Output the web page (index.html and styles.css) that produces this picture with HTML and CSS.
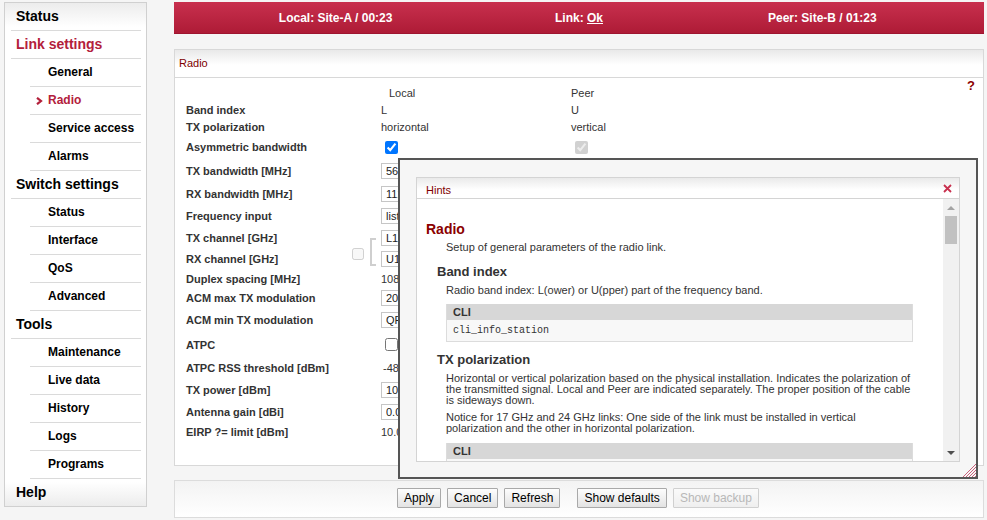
FILE: index.html
```html
<!DOCTYPE html>
<html>
<head>
<meta charset="utf-8">
<title>Radio</title>
<link rel="stylesheet" href="styles.css">
</head>
<body>
<div class="page">
  <nav class="sidebar">
    <ul class="menu">
      <li class="top">Status</li>
      <li class="top active">Link settings</li>
      <li class="sub">General</li>
      <li class="sub active"><svg class="chev" width="7" height="8" viewBox="0 0 7 8"><polyline points="1,0.8 5,4 1,7.2" fill="none" stroke="#b3203b" stroke-width="2.2"/></svg>Radio</li>
      <li class="sub">Service access</li>
      <li class="sub">Alarms</li>
      <li class="top">Switch settings</li>
      <li class="sub">Status</li>
      <li class="sub">Interface</li>
      <li class="sub">QoS</li>
      <li class="sub">Advanced</li>
      <li class="top">Tools</li>
      <li class="sub">Maintenance</li>
      <li class="sub">Live data</li>
      <li class="sub">History</li>
      <li class="sub">Logs</li>
      <li class="sub">Programs</li>
      <li class="top last">Help</li>
    </ul>
  </nav>

  <main class="main">
    <header class="topbar">
      <div>Local: Site-A / 00:23</div>
      <div>Link: <u>Ok</u></div>
      <div>Peer: Site-B / 01:23</div>
    </header>

    <section class="panel">
      <div class="panel-title">Radio</div>
      <div class="panel-body">
        <span class="help">?</span>
        <div class="form">
          <div></div><div class="colhead local-head">Local</div><div class="colhead">Peer</div>

          <div class="lbl">Band index</div><div class="val">L</div><div class="val">U</div>
          <div class="lbl">TX polarization</div><div class="val">horizontal</div><div class="val">vertical</div>
          <div class="lbl">Asymmetric bandwidth</div><div class="val"><input type="checkbox" class="chk" checked></div><div class="val"><input type="checkbox" class="chk" checked disabled></div>
          <div class="lbl">TX bandwidth [MHz]</div><div class="val"><input class="inp" value="56"></div><div></div>
          <div class="lbl">RX bandwidth [MHz]</div><div class="val"><input class="inp" value="112"></div><div></div>
          <div class="lbl">Frequency input</div><div class="val"><input class="inp" value="list"></div><div></div>
          <div class="lbl has-link">TX channel [GHz]<div class="linker"><input type="checkbox" class="chk link-chk" disabled><span class="bracket"></span></div></div><div class="val"><input class="inp" value="L1"></div><div></div>
          <div class="lbl">RX channel [GHz]</div><div class="val"><input class="inp" value="U1"></div><div></div>
          <div class="lbl">Duplex spacing [MHz]</div><div class="val">1080</div><div></div>
          <div class="lbl">ACM max TX modulation</div><div class="val"><input class="inp" value="2048QAM"></div><div></div>
          <div class="lbl">ACM min TX modulation</div><div class="val"><input class="inp" value="QPSK"></div><div></div>
          <div class="lbl">ATPC</div><div class="val"><input type="checkbox" class="chk"></div><div></div>
          <div class="lbl">ATPC RSS threshold [dBm]</div><div class="val shift">-48</div><div></div>
          <div class="lbl">TX power [dBm]</div><div class="val"><input class="inp" value="10"></div><div></div>
          <div class="lbl">Antenna gain [dBi]</div><div class="val"><input class="inp" value="0.0"></div><div></div>
          <div class="lbl">EIRP ?= limit [dBm]</div><div class="val">10.0</div><div></div>
        </div>
      </div>
    </section>

    <div class="buttons">
      <button class="btn">Apply</button>
      <button class="btn">Cancel</button>
      <button class="btn">Refresh</button>
      <button class="btn wide-gap">Show defaults</button>
      <button class="btn" disabled>Show backup</button>
    </div>
  </main>

  <div class="modal">
    <div class="hints">
      <div class="hints-title">
        <span class="hints-label">Hints</span>
        <svg class="close" width="9" height="9" viewBox="0 0 9 9"><path d="M1 1L8 8M8 1L1 8" stroke="#c8304e" stroke-width="1.8"/></svg>
      </div>
      <div class="hints-body">
        <div class="hints-content">
          <h2 class="h-main">Radio</h2>
          <p class="h-p">Setup of general parameters of the radio link.</p>
          <h3 class="h-sub">Band index</h3>
          <p class="h-p">Radio band index: L(ower) or U(pper) part of the frequency band.</p>
          <div class="cli">
            <div class="cli-head">CLI</div>
            <div class="cli-body">cli_info_station</div>
          </div>
          <h3 class="h-sub">TX polarization</h3>
          <p class="h-p">Horizontal or vertical polarization based on the physical installation. Indicates the polarization of the transmitted signal. Local and Peer are indicated separately. The proper position of the cable is sideways down.</p>
          <p class="h-p">Notice for 17 GHz and 24 GHz links: One side of the link must be installed in vertical polarization and the other in horizontal polarization.</p>
          <div class="cli">
            <div class="cli-head">CLI</div>
            <div class="cli-body">cli_info_station</div>
          </div>
        </div>
        <div class="vscroll">
          <div class="arrow-box"><span class="arrow-up"></span></div>
          <div class="thumb"></div>
          <div class="track-fill"></div>
          <div class="arrow-box"><span class="arrow-down"></span></div>
        </div>
      </div>
    </div>
    <svg class="grip" width="14" height="14" viewBox="0 0 14 14">
      <path d="M14 1L1 14M14 4L4 14M14 7L7 14M14 10L10 14M14 13L13 14" stroke="#c9607a" stroke-width="1"/>
    </svg>
  </div>
</div>
</body>
</html>
```

FILE: styles.css
```css
* { box-sizing: border-box; }
html, body { margin: 0; padding: 0; }
body {
  background: #f5f5f5;
  font-family: "Liberation Sans", Arial, sans-serif;
  color: #222;
  width: 987px;
  height: 520px;
  overflow: hidden;
}
.page {
  position: relative;
  display: flex;
  align-items: flex-start;
  padding: 2px 0 0 4px;
  height: 520px;
}

/* Sidebar */
.sidebar {
  flex: none;
  width: 143px;
  height: 505px;
  border: 1px solid #d0d0d0;
  background: linear-gradient(#ececec, #fff 24px, #fff calc(100% - 24px), #ececec);
}
.menu {
  list-style: none;
  margin: 0;
  padding: 0 5px 0 6px;
}
.menu li {
  height: 28px;
  line-height: 27px;
  border-bottom: 1px solid #dadada;
  font-weight: bold;
  color: #000;
  white-space: nowrap;
}
.menu li.last { border-bottom: none; }
.menu .top { font-size: 14px; padding-left: 5px; }
.menu .sub { font-size: 12px; margin-left: 19px; padding-left: 18px; }
.menu .active { color: #b3203b; }
.menu .sub.active { display: flex; align-items: center; padding-left: 6px; }
.chev { margin-right: 5px; margin-top: 1px; }

/* Main column */
.main {
  flex: none;
  width: 810px;
  margin-left: 27px;
  display: flex;
  flex-direction: column;
}
.topbar {
  height: 32px;
  display: grid;
  grid-template-columns: 1fr 1fr 1fr;
  padding: 0 40px;
  background: linear-gradient(#c8304e, #ae1b36);
  border-bottom: 1px solid #9e1530;
  color: #fff;
  font-size: 12px;
  font-weight: bold;
  line-height: 32px;
  text-align: center;
}
.topbar u { text-decoration: underline; }

.panel {
  margin-top: 15px;
  height: 417px;
  border: 1px solid #d8d8d8;
  background: #fff;
  display: flex;
  flex-direction: column;
}
.panel-title {
  height: 28px;
  border-bottom: 1px solid #d8d8d8;
  background: linear-gradient(#e9e9e9, #fff 55%);
  color: #800000;
  font-size: 11px;
  line-height: 27px;
  padding-left: 4px;
}
.panel-body {
  position: relative;
  flex: 1;
  padding: 6px 0 0 11px;
}
.help {
  position: absolute;
  right: 8px;
  top: 0px;
  color: #8b0000;
  font-size: 13px;
  font-weight: bold;
}
.form {
  display: grid;
  grid-template-columns: 195px 190px 1fr;
  grid-template-rows: 17px 17px 18px 22px 25px 22px 22px 22px 20px 19px 20px 24px 25px 22px 22px 21px 20px;
  align-items: center;
  font-size: 11px;
}
.lbl { font-weight: bold; color: #333; white-space: nowrap; }
.val { color: #333; white-space: nowrap; display: flex; align-items: center; }
.val.shift { padding-left: 2px; }
.colhead { color: #333; }
.local-head { padding-left: 8px; }
.inp {
  width: 90px;
  height: 16px;
  border: 1px solid #c6c6c6;
  background: #fff;
  font-family: "Liberation Sans", Arial, sans-serif;
  font-size: 11px;
  color: #222;
  padding: 0 4px;
  margin: 0;
  outline: none;
}
.chk {
  width: 13px;
  height: 13px;
  margin: 0 0 0 4px;
  accent-color: #0075ff;
}
.lbl.has-link {
  position: relative;
  align-self: stretch;
  display: flex;
  align-items: center;
}
.linker {
  position: absolute;
  right: 0;
  top: 11px;
  height: 28px;
  display: flex;
  align-items: center;
}
.link-chk { margin: 4px 6px 0 0; width: 12px; height: 12px; }
.bracket {
  width: 6px;
  height: 28px;
  border: 2px solid #cfcfcf;
  border-right: none;
  margin-right: 5px;
}

/* Buttons */
.buttons {
  margin-top: 14px;
  height: 38px;
  border: 1px solid #dcdcdc;
  background: linear-gradient(#f3f3f3, #fff);
  display: flex;
  justify-content: center;
  align-items: flex-start;
  padding-top: 7px;
  padding-right: 2px;
}
.btn {
  height: 20px;
  margin: 0 3px;
  padding: 0 6px;
  border: 1px solid #a9a9a9;
  border-radius: 1px;
  background: linear-gradient(#fdfdfd, #e3e3e3);
  font-family: "Liberation Sans", Arial, sans-serif;
  font-size: 12px;
  color: #000;
  line-height: 18px;
}
.btn.wide-gap { margin-left: 14px; }
.btn:disabled { color: #b8b8b8; border-color: #d0d0d0; background: linear-gradient(#fafafa, #efefef); }

/* Modal */
.modal {
  position: absolute;
  left: 398px;
  top: 158px;
  width: 580px;
  height: 321px;
  border: 2px solid #555;
  background: #f6f6f6;
  padding: 17px 16px 15px 16px;
}
.hints {
  height: 100%;
  border: 1px solid #d4d4d4;
  background: #fff;
  display: flex;
  flex-direction: column;
}
.hints-title {
  flex: none;
  height: 21px;
  border-bottom: 1px solid #d4d4d4;
  background: linear-gradient(#eaeaea, #fff 60%);
  color: #800000;
  font-size: 11px;
  padding: 0 7px 0 9px;
  display: flex;
  justify-content: space-between;
  align-items: center;
}
.hints-label { padding-top: 3px; }
.close { margin-top: 1px; }
.hints-body {
  flex: 1;
  display: flex;
  min-height: 0;
}
.hints-content {
  flex: 1;
  overflow: hidden;
  padding: 22px 30px 0 9px;
  color: #333;
}
.h-main {
  margin: 0;
  font-size: 14px;
  line-height: 16px;
  font-weight: bold;
  color: #8b0000;
}
.h-sub {
  margin: 11px 0 0 11px;
  font-size: 13px;
  line-height: 15px;
  font-weight: bold;
  color: #333;
}
.h-p {
  margin: 6px 0 0 20px;
  font-size: 11px;
  line-height: 11px;
  color: #333;
}
.h-main + .h-p { margin-top: 5px; }
.cli {
  margin: 8px 0 0 20px;
  border: 1px solid #dcdcdc;
  border-top: none;
}
.cli-head {
  height: 16px;
  background: #d7d7d7;
  font-size: 11px;
  font-weight: bold;
  line-height: 16px;
  padding-left: 6px;
  color: #333;
}
.cli-body {
  height: 21px;
  background: #f8f8f8;
  font-family: "Liberation Mono", "DejaVu Sans Mono", monospace;
  font-size: 10px;
  line-height: 21px;
  padding-left: 6px;
  color: #333;
}
.h-sub + .h-p { margin-top: 6px; }
.cli + .h-sub { margin-top: 10px; }
.h-p + .h-p + .cli { margin-top: 9px; }
.vscroll {
  flex: none;
  width: 16px;
  background: #f1f1f1;
  display: flex;
  flex-direction: column;
  align-items: center;
}
.arrow-box {
  height: 17px;
  width: 100%;
  display: flex;
  align-items: center;
  justify-content: center;
}
.arrow-up {
  width: 0; height: 0;
  border-left: 4px solid transparent;
  border-right: 4px solid transparent;
  border-bottom: 4px solid #a3a3a3;
}
.arrow-down {
  width: 0; height: 0;
  border-left: 4px solid transparent;
  border-right: 4px solid transparent;
  border-top: 4px solid #505050;
}
.thumb {
  width: 12px;
  height: 28px;
  background: #c1c1c1;
}
.track-fill { flex: 1; }
.grip {
  position: absolute;
  right: 0px;
  bottom: 0px;
}
```
